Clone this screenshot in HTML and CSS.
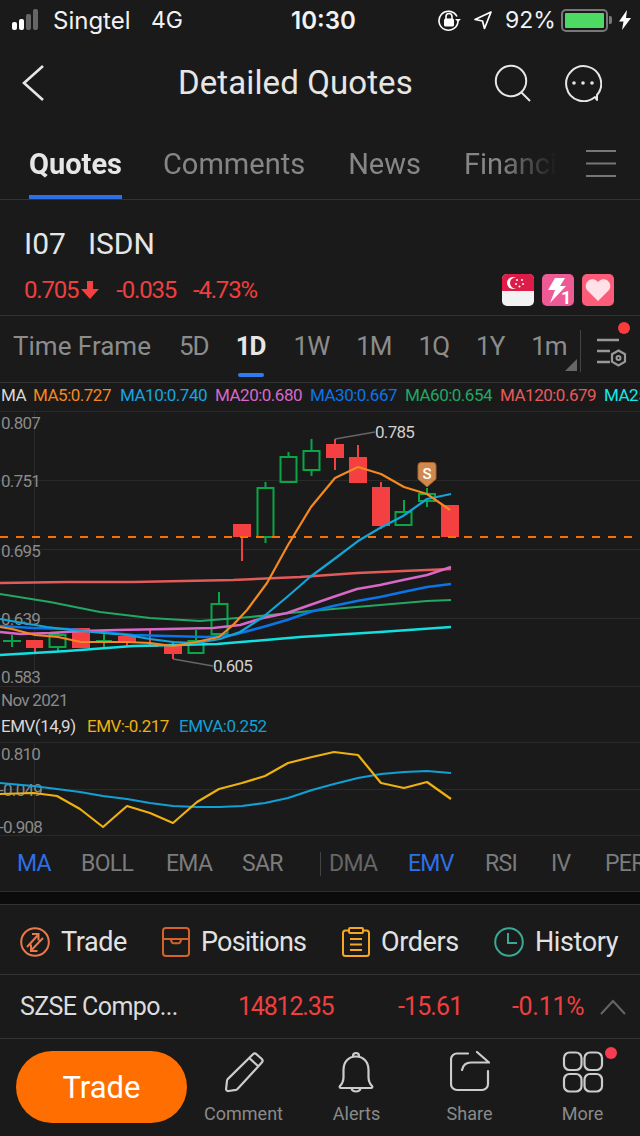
FILE: index.html
```html
<!DOCTYPE html>
<html lang="en">
<head>
<meta charset="utf-8">
<title>Detailed Quotes</title>
<link rel="stylesheet" href="styles.css">
</head>
<body>
<div class="app">
  <header class="status">
    <svg class="signal" width="26" height="22" viewBox="0 0 26 22"><rect x="0" y="13" width="5" height="8" rx="2" fill="#fff"/><rect x="7" y="10" width="5" height="11" rx="2" fill="#fff"/><rect x="14" y="5" width="5" height="16" rx="2" fill="#666"/><rect x="21" y="0" width="5" height="21" rx="2" fill="#666"/></svg>
    <span class="carrier">Singtel</span>
    <span class="net">4G</span>
    <span class="clock">10:30</span>
    <svg class="lock" width="24" height="24" viewBox="0 0 24 24"><path d="M20 8.5A9.5 9.5 0 1 0 21 13" fill="none" stroke="#fff" stroke-width="1.6"/><path d="M18 11h6l-3 3z" fill="#fff"/><rect x="7" y="10.500" width="10" height="8" rx="1.500" fill="#fff"/><path d="M9 11V8.500a3 3 0 0 1 6 0V11" fill="none" stroke="#fff" stroke-width="1.600"/></svg>
    <svg class="loc" width="20" height="20" viewBox="0 0 20 20"><path d="M18 2 2 9.500l7.500 1.500 2 7.500z" fill="none" stroke="#fff" stroke-width="1.700" stroke-linejoin="round"/></svg>
    <span class="pct">92%</span>
    <span class="battery"><span class="battery-fill"></span></span>
    <span class="battery-cap"></span>
    <svg class="bolt" width="12" height="20" viewBox="0 0 12 20"><path d="M8 0 0 11.500h4.500L3 20l9-12H7z" fill="#fff"/></svg>
  </header>

  <nav class="topbar">
    <svg class="back" width="24" height="38" viewBox="0 0 24 38"><path d="M22 2 3 19l19 17" fill="none" stroke="#e6e6e6" stroke-width="2.600"/></svg>
    <h1 class="title">Detailed Quotes</h1>
    <svg class="search" width="38" height="38" viewBox="0 0 38 38"><circle cx="17" cy="17" r="15.200" fill="none" stroke="#e6e6e6" stroke-width="2"/><path d="M27 28l9 9" stroke="#e6e6e6" stroke-width="2"/></svg>
    <svg class="chat" width="38" height="38" viewBox="0 0 38 38"><path d="M31 33A17.500 17.500 0 1 1 33 31v5z" fill="none" stroke="#e6e6e6" stroke-width="2" stroke-linejoin="round"/><circle cx="10" cy="19" r="1.800" fill="#e6e6e6"/><circle cx="19" cy="19" r="1.800" fill="#e6e6e6"/><circle cx="28" cy="19" r="1.800" fill="#e6e6e6"/></svg>
  </nav>

  <section class="tabs">
    <div class="tab-track">
      <span class="tab tab-on">Quotes</span>
      <span class="tab">Comments</span>
      <span class="tab">News</span>
      <span class="tab">Financials</span>
    </div>
    <svg class="hamburger" width="32" height="30" viewBox="0 0 32 30"><path d="M1 2h30M1 14.500h30M1 27h30" stroke="#777" stroke-width="2"/></svg>
  </section>

  <section class="stock">
    <div class="stock-name"><span>I07</span><span>ISDN</span></div>
    <div class="stock-line">
      <span class="price">0.705</span>
      <svg class="down" width="20" height="20" viewBox="0 0 20 20"><path d="M7 1h6v8h6L10 19 1 9h6z" fill="#f44040"/></svg>
      <span class="change">-0.035</span>
      <span class="change-pct">-4.73%</span>
      <span class="badges">
        <svg width="32" height="32" viewBox="0 0 32 32"><rect width="32" height="32" rx="5" fill="#f2f2f2"/><path d="M0 17V5a5 5 0 0 1 5-5h22a5 5 0 0 1 5 5v12z" fill="#dd1c47"/><circle cx="11" cy="9" r="6" fill="#fff"/><circle cx="13.500" cy="9" r="5.500" fill="#dd1c47"/><g fill="#fff"><circle cx="15" cy="6" r="1"/><circle cx="20" cy="6" r="1"/><circle cx="14" cy="10" r="1"/><circle cx="21" cy="10" r="1"/><circle cx="17.500" cy="12.500" r="1"/></g></svg>
        <svg width="32" height="32" viewBox="0 0 32 32"><rect width="32" height="32" rx="5" fill="#ee5a96"/><path d="M13 4h10l-5 8h6L8 29l5-13H6z" fill="#fff"/><text x="19" y="30" class="badge-num">1</text></svg>
        <svg width="32" height="32" viewBox="0 0 32 32"><rect width="32" height="32" rx="5" fill="#fb5c78"/><path d="M16 27 5 16a6.500 6.500 0 0 1 11-8 6.500 6.500 0 0 1 11 8z" fill="#ffe1e7"/></svg>
      </span>
    </div>
  </section>

  <section class="frames">
    <span class="frame-label">Time Frame</span>
    <span class="frame">5D</span>
    <span class="frame frame-on">1D</span>
    <span class="frame">1W</span>
    <span class="frame">1M</span>
    <span class="frame">1Q</span>
    <span class="frame">1Y</span>
    <span class="frame">1m</span>
    <span class="corner"></span>
    <span class="divider"></span>
    <svg class="settings" width="32" height="34" viewBox="0 0 32 34"><path d="M2 4h22M2 15h13M2 26h13" stroke="#999" stroke-width="2.500"/><path d="M23.500 14.500l6.500 3.700v7.500l-6.500 3.700-6.500-3.700v-7.500z" fill="none" stroke="#999" stroke-width="2.200"/><circle cx="23.500" cy="22" r="2" fill="none" stroke="#999" stroke-width="2"/></svg>
    <span class="dot dot-settings"></span>
  </section>

  <div class="legend">
    <span class="lg-white w-ma">MA</span>
    <span class="lg-ma5 w-ma5">MA5:0.727</span>
    <span class="lg-ma10 w-ma10">MA10:0.740</span>
    <span class="lg-ma20 w-ma20">MA20:0.680</span>
    <span class="lg-ma30 w-ma20">MA30:0.667</span>
    <span class="lg-ma60 w-ma60">MA60:0.654</span>
    <span class="lg-ma120 w-ma120">MA120:0.679</span>
    <span class="lg-ma250">MA250</span>
  </div>

  <svg class="chart" width="640" height="306" viewBox="0 408 640 306">
    <g class="grid">
      <path d="M0 411.500h640M0 480.500h640M0 549.500h640M0 618.500h640M0 686.500h640M34.500 411v275"/>
    </g>
    <g class="axis">
      <text x="1" y="429">0.807</text>
      <text x="1" y="487">0.751</text>
      <text x="1" y="557">0.695</text>
      <text x="1" y="625">0.639</text>
      <text x="1" y="683">0.583</text>
      <text x="1" y="706">Nov 2021</text>
    </g>

    <path class="wick-red" d="M242 537v24M335 439v31M358 445v12M381 482v47M35 648v4M127 642v5M150 629v17M173 641v18"/>
    <path class="wick-green" d="M265.500 482v6M265.500 537v6M288.500 452v5M311.500 439v12M311.500 470v6M404 500v12M427 488v6M427 501v6M58 632v3M58 647v5M196 630v11M219 592v12M12 635v12M104 629v18"/>
    <path class="wick-green" d="M3 641h18M96 641h16"/>
    <path class="wick-red" d="M142 646h16"/>
    <g class="body-red">
      <rect x="233" y="524" width="18" height="13"/>
      <rect x="326" y="444" width="18" height="14"/>
      <rect x="349" y="457" width="18" height="26"/>
      <rect x="372" y="487" width="18" height="39"/>
      <rect x="441" y="505" width="18" height="32"/>
      <rect x="26" y="640" width="17" height="8"/>
      <rect x="72" y="628" width="18" height="20"/>
      <rect x="118" y="636" width="18" height="6"/>
      <rect x="164" y="645" width="18" height="9"/>
    </g>
    <g class="body-green">
      <rect x="257.500" y="488" width="16" height="49"/>
      <rect x="280.500" y="457" width="16" height="25"/>
      <rect x="303.500" y="451" width="16" height="19"/>
      <rect x="395.500" y="512" width="16" height="13"/>
      <rect x="419" y="494" width="16" height="7"/>
      <rect x="49.500" y="635" width="16" height="12"/>
      <rect x="188.500" y="641" width="15" height="12"/>
      <rect x="211.500" y="604" width="16" height="30"/>
    </g>

    <path class="dash" d="M0 537h640"/>

    <polyline class="ln ma120" points="0,583 67,582 133,582 233,580 300,577 357,573 403,571 451,569"/>
    <polyline class="ln ma60" points="0,594 50,602 100,612 150,618 200,621 250,617 300,612 333,609 380,605 427,601 451,600"/>
    <polyline class="ln ma250" points="0,655 67,651 133,646 217,644 300,637 380,632 451,627"/>
    <polyline class="ln ma30" points="0,626 33,628 67,629 100,632 133,635 167,636 207,637 233,635 263,627 287,620 310,612 333,606 357,601 380,597 403,592 427,587 451,584"/>
    <polyline class="ln ma20" points="0,632 20,634 50,633 83,631 117,630 167,629 213,628 240,625 263,618 287,613 310,605 333,597 357,589 380,585 403,580 427,575 451,567"/>
    <polyline class="ln ma10" points="0,619 17,622 47,627 72,630 103,633 127,635 150,639 173,642 197,643 220,639 240,632 263,617 287,597 310,577 337,557 358,541 380,528 403,516 427,499 451,494"/>
    <polyline class="ln ma5" points="0,627 12,629 35,635 58,637 81,642 104,642 127,642 150,643 173,646 196,642 219,637 233,625 247,610 267,583 288,545 311,507 335,478 358,467 381,474 404,487 427,494 450,510"/>

    <path class="callout" d="M335 439l40-7M173 659l40 7"/>
    <text class="peak" x="375" y="438">0.785</text>
    <text class="peak" x="213" y="672">0.605</text>

    <path class="marker" d="M421 462.500h12a3 3 0 0 1 3 3v13.500l-9 8-9-8v-13.500a3 3 0 0 1 3-3z"/>
    <text class="marker-text" x="427" y="479">S</text>
  </svg>

  <div class="emv-legend">
    <span class="lg-white w-emv">EMV(14,9)</span>
    <span class="lg-emv w-emvy">EMV:-0.217</span>
    <span class="lg-emva">EMVA:0.252</span>
  </div>

  <svg class="chart emv" width="640" height="96" viewBox="0 740 640 96">
    <g class="grid"><path d="M0 742.500h640M0 789.500h640M0 835.500h640M34.500 742v93"/></g>
    <g class="axis">
      <text x="1" y="760">0.810</text>
      <text x="-1" y="796">-0.049</text>
      <text x="-1" y="833">-0.908</text>
    </g>
    <polyline class="ln emv-a" points="0,783 33,786 57,789 80,792 103,796 127,799 150,803 173,806 197,807 219,807 242,806 265,803 288,798 312,790 334,784 358,778 381,774 404,772 427,771 451,773"/>
    <polyline class="ln emv-y" points="0,794 34,793 57,796 80,809 103,827 127,806 150,813 173,823 197,802 219,789 242,783 265,776 288,763 312,757 334,752 358,755 381,783 404,788 427,782 451,799"/>
  </svg>

  <section class="indicators">
    <span class="ind-on">MA</span>
    <span>BOLL</span>
    <span>EMA</span>
    <span>SAR</span>
    <span class="ind-sep"></span>
    <span class="ind-dim">DMA</span>
    <span class="ind-on">EMV</span>
    <span>RSI</span>
    <span>IV</span>
    <span>PER</span>
  </section>

  <div class="gap"></div>

  <section class="actions">
    <div class="action">
      <svg width="30" height="30" viewBox="0 0 30 30"><circle cx="15" cy="15" r="13.800" fill="none" stroke="#e8794a" stroke-width="2"/><path d="M7 20 18 8m-6-1h6.500v6.500M23 11 11.500 23m6 1H11v-6.500" fill="none" stroke="#e8794a" stroke-width="2"/></svg>
      <span>Trade</span>
    </div>
    <div class="action action-pos">
      <svg width="28" height="30" viewBox="0 0 28 30"><rect x="1" y="1" width="26" height="28" rx="3" fill="none" stroke="#d4622a" stroke-width="2"/><path d="M1 12h26M8.500 12l1.500 3.500c.2.500.5.700 1 .700h6c.5 0 .8-.2 1-.7l1.500-3.500" fill="none" stroke="#d4622a" stroke-width="2"/></svg>
      <span>Positions</span>
    </div>
    <div class="action">
      <svg width="28" height="30" viewBox="0 0 28 30"><rect x="1" y="3.500" width="26" height="25.500" rx="2.500" fill="none" stroke="#f5a623" stroke-width="2"/><rect x="7" y="1" width="14" height="5" rx="1" fill="#1a1a1a" stroke="#f5a623" stroke-width="2"/><path d="M8 12h12M8 17.500h12M8 23h12" stroke="#f5a623" stroke-width="2"/></svg>
      <span>Orders</span>
    </div>
    <div class="action">
      <svg width="30" height="30" viewBox="0 0 30 30"><circle cx="15" cy="15" r="13.800" fill="none" stroke="#3aa896" stroke-width="2"/><path d="M14 6v10h9" fill="none" stroke="#3aa896" stroke-width="2"/></svg>
      <span>History</span>
    </div>
  </section>

  <section class="index">
    <span class="index-name">SZSE Compo...</span>
    <span class="index-val">14812.35</span>
    <span class="index-chg">-15.61</span>
    <span class="index-pct">-0.11%</span>
    <svg class="caret" width="26" height="16" viewBox="0 0 26 16"><path d="M1 15 13 2l12 13" fill="none" stroke="#666" stroke-width="2"/></svg>
  </section>

  <footer class="dock">
    <button class="trade-btn">Trade</button>
    <div class="dock-item">
      <svg width="42" height="42" viewBox="0 0 42 42"><path d="M30 3.200c1-1 2.500-1 3.500 0l5.300 4.800c1 1 1 2.400 0 3.500L14.500 38c-.5.500-1 .7-1.500.8l-7.500 1.200c-1.500.2-2.500-.8-2.400-2.200l.9-8c0-.6.300-1.200.7-1.700z" fill="none" stroke="#ccc" stroke-width="2.200" stroke-linejoin="round"/><path d="M26.500 7.300l8.500 7.700" stroke="#ccc" stroke-width="2.200"/></svg>
      <span>Comment</span>
    </div>
    <div class="dock-item">
      <svg width="38" height="44" viewBox="1 0 38 44"><path d="M3 35c3-3 3.500-5 3.500-9v-7c0-8 5-13.500 12.500-13.500S31.500 11 31.500 19v7c0 4 .5 6 3.500 9 .7 1 .3 2-1 2H4c-1.300 0-1.700-1-1-2z" fill="none" stroke="#ccc" stroke-width="2.200" stroke-linejoin="round"/><path d="M16 5c0-4 6-4 6 0M14.500 37.500c1 4 8 4 9 0" fill="none" stroke="#ccc" stroke-width="2.200"/></svg>
      <span>Alerts</span>
    </div>
    <div class="dock-item">
      <svg width="40" height="44" viewBox="0 0 40 44"><path d="M18 2.500H7a6 6 0 0 0-6 6V33a6 6 0 0 0 6 6h25a6 6 0 0 0 6-6V20" fill="none" stroke="#ccc" stroke-width="2.200" stroke-linecap="round"/><path d="M12 19c1-5 4-7.500 9-7.500h18L27 1" fill="none" stroke="#ccc" stroke-width="2.200" stroke-linecap="round"/></svg>
      <span>Share</span>
    </div>
    <div class="dock-item">
      <svg width="42" height="42" viewBox="0 0 42 42"><g fill="none" stroke="#ccc" stroke-width="2.200"><rect x="2" y="1.500" width="17.500" height="17.500" rx="5.500"/><rect x="22.500" y="1.500" width="17.500" height="17.500" rx="5.500"/><rect x="2" y="23" width="17.500" height="17.500" rx="5.500"/><rect x="22.500" y="23" width="17.500" height="17.500" rx="5.500"/></g></svg>
      <span>More</span>
      <span class="dot dot-more"></span>
    </div>
  </footer>
</div>
</body>
</html>
```
FILE: styles.css
```css
* { box-sizing: border-box; }
html, body { margin: 0; padding: 0; background: #1a1a1a; }
body { font-family: Roboto, "Liberation Sans", sans-serif; color: #e6e6e6; }
.app { width: 640px; height: 1136px; overflow: hidden; background: #1a1a1a; }
svg { display: block; flex: none; }

/* status bar */
.status { height: 40px; display: flex; align-items: center; padding-left: 12px; font-family: Inter, sans-serif; color: #f2f2f2; font-size: 24px; }
.carrier { margin-left: 15px; width: 78px; }
.net { margin-left: 20px; width: 32px; font-size: 23px; }
.clock { margin-left: 108px; width: 66px; font-weight: 600; letter-spacing: 0; white-space: nowrap; }
.lock { margin-left: 80px; }
.loc { margin-left: 12px; }
.pct { margin-left: 12px; width: 50px; font-size: 23px; }
.battery { margin-left: 6px; width: 47px; height: 23px; border: 2px solid #777; border-radius: 5px; padding: 2px; display: flex; }
.battery-fill { flex: 1; background: #4cd964; border-radius: 1px; }
.battery-cap { width: 3px; height: 8px; background: #777; margin-left: 1px; border-radius: 0 2px 2px 0; }
.bolt { margin-left: 7px; }

/* navigation */
.topbar { height: 85px; display: flex; align-items: center; padding: 0 26px 0 21px; }
.back { margin-top: 1px; }
.title { margin: 0 0 0 133px; width: 240px; font-size: 33px; font-weight: 400; letter-spacing: .1px; color: #e6e6e6; white-space: nowrap; }
.search { margin-left: 76px; }
.chat { margin-left: 32px; }

/* primary tabs */
.tabs { height: 75px; display: flex; align-items: flex-start; border-bottom: 1px solid #333; }
.tab-track { width: 557px; height: 74px; padding-left: 29px; display: flex; gap: 43px; overflow: hidden; -webkit-mask-image: linear-gradient(90deg, #000 90%, transparent 100%); mask-image: linear-gradient(90deg, #000 90%, transparent 100%); }
.tab { font-size: 29px; line-height: 78px; color: #868686; white-space: nowrap; flex: none; }
.tab-on { color: #e6e6e6; font-weight: 700; margin-right: -2px; box-shadow: inset 0 -4px 0 #2f6fe8; }
.hamburger { margin: 24px 0 0 28px; }

/* symbol header */
.stock { height: 116px; padding: 24px 26px 0 24px; border-bottom: 1px solid #333; }
.stock-name { display: flex; gap: 22px; font-size: 30px; line-height: 40px; color: #e6e6e6; }
.stock-line { display: flex; align-items: center; margin-top: 6px; height: 40px; font-size: 24px; letter-spacing: -1.200px; color: #ef3f3f; }
.down { margin-left: 2px; }
.change { margin-left: 16px; }
.change-pct { margin-left: 17px; }
.badges { margin-left: auto; display: flex; gap: 8px; }
.badge-num { font: 700 18px Roboto, sans-serif; fill: #fff; letter-spacing: 0; }

/* time frames */
.frames { height: 67px; display: flex; align-items: center; padding: 0 0 6px 13px; position: relative; border-bottom: 1px solid #333; font-size: 26px; color: #8c8c8c; }
.frame-label { width: 166px; white-space: nowrap; }
.frame { margin-right: 27px; letter-spacing: -1px; }
.frame-on { color: #e6e6e6; font-weight: 700; margin-right: 28px; position: relative; }
.frame-on::after { content: ""; position: absolute; left: 2px; right: 2px; top: 42px; height: 4px; border-radius: 2px; background: #2f7cf0; }
.corner { position: absolute; left: 565px; top: 43px; border-style: solid; border-width: 0 0 12px 12px; border-color: transparent transparent #666 transparent; }
.divider { position: absolute; left: 580px; top: 14px; width: 1px; height: 42px; background: #444; }
.settings { position: absolute; left: 595px; top: 20px; }
.dot { position: absolute; border-radius: 50%; background: #f63c3c; }
.dot-settings { left: 618px; top: 6px; width: 12px; height: 12px; }

/* chart legends */
.legend, .emv-legend { display: flex; white-space: nowrap; overflow: hidden; font-size: 17px; letter-spacing: -.5px; line-height: 24px; padding-left: 1px; }
.legend { height: 25px; }
.emv-legend { height: 26px; }
.legend span, .emv-legend span { flex: none; }
.w-ma { width: 32px; }
.w-ma5 { width: 87px; }
.w-ma10 { width: 95px; }
.w-ma20 { width: 95px; }
.w-ma60 { width: 95px; }
.w-ma120 { width: 104px; }
.w-emv { width: 86px; }
.w-emvy { width: 92px; }
.lg-white { color: #d8d8d8; }
.lg-ma5 { color: #f5881f; }
.lg-ma10 { color: #14a5e2; }
.lg-ma20 { color: #d868c8; }
.lg-ma30 { color: #0a75e8; }
.lg-ma60 { color: #21a863; }
.lg-ma120 { color: #e85a5a; }
.lg-ma250 { color: #12e8e8; }
.lg-emv { color: #eeb10f; }
.lg-emva { color: #11a0d6; }

/* candlestick chart */
.grid path { stroke: #2a2a2a; stroke-width: 1; fill: none; }
.axis text { font-size: 17px; letter-spacing: -.7px; fill: #8a8a8a; }
.wick-red { stroke: #f44040; stroke-width: 2; fill: none; }
.wick-green { stroke: #08a648; stroke-width: 2; fill: none; }
.body-red rect { fill: #f44040; }
.body-green rect { fill: none; stroke: #08a648; stroke-width: 2; }
.dash { stroke: #ff6e00; stroke-width: 2; stroke-dasharray: 8 8; fill: none; }
.ln { fill: none; stroke-width: 2.200; stroke-linejoin: round; }
.ma5 { stroke: #f5881f; }
.ma10 { stroke: #14a5d8; }
.ma20 { stroke: #d868c8; stroke-width: 2.500; }
.ma30 { stroke: #0a75e8; stroke-width: 2.500; }
.ma60 { stroke: #21a863; }
.ma120 { stroke: #e25a5a; stroke-width: 2.500; }
.ma250 { stroke: #12e0e0; stroke-width: 2.500; }
.emv-a { stroke: #11a0d6; }
.emv-y { stroke: #eeb10f; }
.callout { stroke: #666; stroke-width: 1.500; fill: none; }
.peak { font-size: 17px; letter-spacing: -.7px; fill: #d0d0d0; }
.marker { fill: #d08a50; stroke: #a8632c; stroke-width: 1; }
.marker-text { font-size: 15px; font-weight: 500; fill: #fff; text-anchor: middle; }

/* indicator strip */
.indicators { height: 56px; display: grid; grid-template-columns: 64px 85px 76px 78px 9px 79px 77px 66px 54px 60px; align-items: center; padding-left: 17px; white-space: nowrap; overflow: hidden; font-size: 23px; letter-spacing: -.7px; color: #7c7c7c; border-bottom: 1px solid #2e2e2e; }
.ind-on { color: #2f6fe8; }
.ind-dim { color: #666; }
.ind-sep { width: 1px; height: 24px; background: #444; }
.gap { height: 12px; background: #0b0b0b; }

/* trade shortcuts */
.actions { height: 71px; display: grid; grid-template-columns: 142px 180px 152px 126px; align-items: center; padding: 5px 0 0 20px; border-top: 1px solid #333; border-bottom: 1px solid #333; font-size: 27px; letter-spacing: -.4px; color: #e2e2e2; }
.action { display: flex; align-items: center; gap: 11px; white-space: nowrap; }
.action-pos { letter-spacing: -.8px; }

/* index ticker */
.index { height: 64px; display: flex; align-items: center; padding-left: 20px; border-bottom: 1px solid #333; font-size: 25px; color: #ef3f3f; }
.index-name { width: 218px; color: #dcdcdc; letter-spacing: -.6px; white-space: nowrap; }
.index-val { width: 160px; letter-spacing: -1.200px; }
.index-chg { width: 114px; letter-spacing: -.9px; }
.index-pct { width: 88px; letter-spacing: -.3px; }

/* bottom dock */
.dock { display: flex; padding: 12px 0 0 16px; }
.trade-btn { width: 171px; height: 72px; border: 0; border-radius: 36px; background: #ff6e00; color: #fff; font: 400 31px Roboto, sans-serif; flex: none; }
.dock-item { position: relative; width: 113px; height: 73px; display: flex; flex-direction: column; align-items: center; justify-content: space-between; font-size: 18px; color: #8a8a8a; }
.dot-more { left: 79px; top: -4px; width: 12px; height: 12px; background: #f63c50; }
```
